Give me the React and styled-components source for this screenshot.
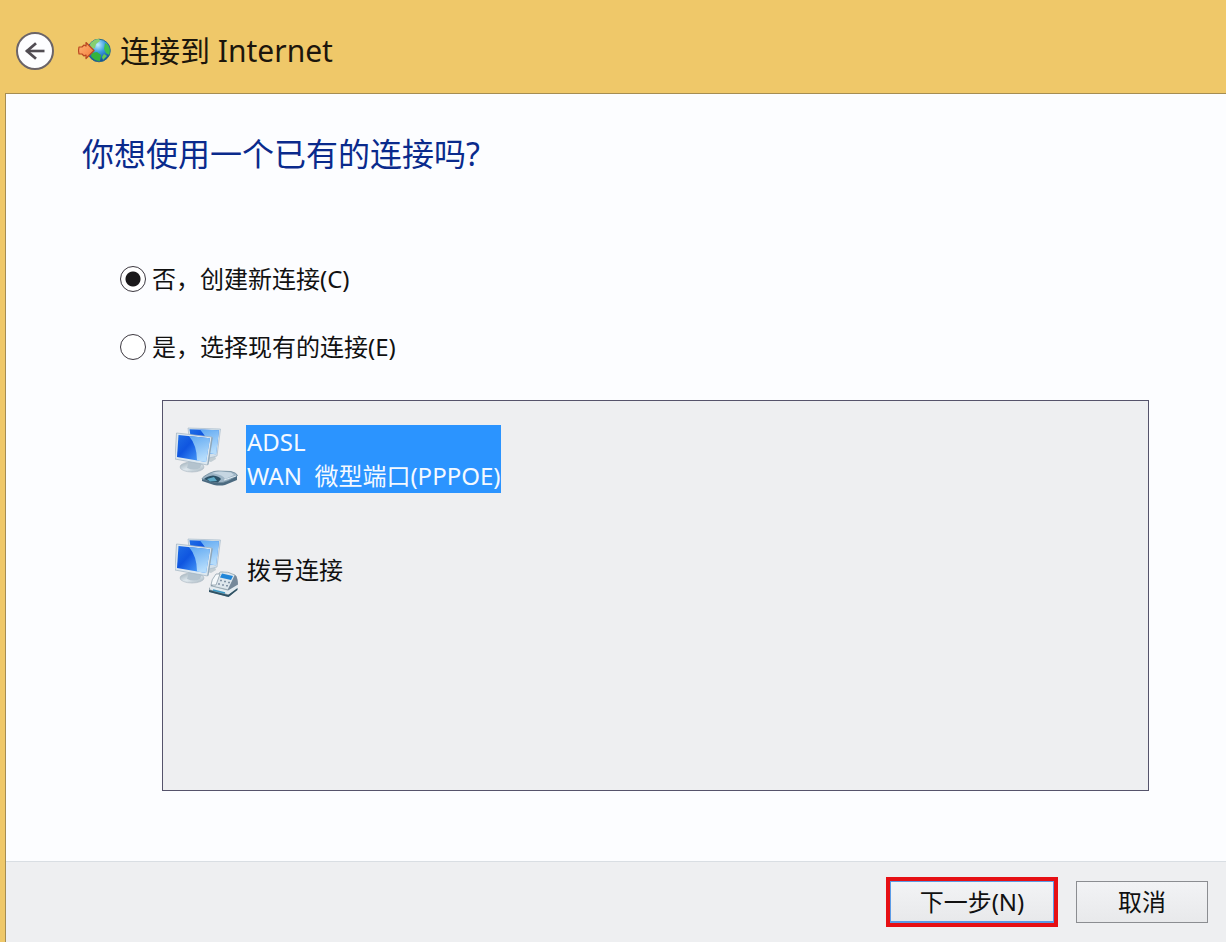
import React, { useState } from "react";
import styled, { createGlobalStyle } from "styled-components";

const GlobalStyle = createGlobalStyle`
  * {
    box-sizing: border-box;
  }
  body {
    margin: 0;
    background: #efc869;
    color: #111;
    font-family: "Noto Sans", "Noto Sans CJK SC", sans-serif;
    font-size: 24px;
  }
`;

const Window = styled.div`
  display: flex;
  flex-direction: column;
  min-height: 100vh;
  padding-left: 5px;
`;
const TitleBar = styled.header`
  display: flex;
  align-items: center;
  height: 93px;
  padding: 9px 11px 0;
`;
const BackButton = styled.button`
  display: flex;
  align-items: center;
  justify-content: center;
  width: 38px;
  height: 38px;
  margin-right: 24px;
  padding: 0;
  border: 2px solid #6b6468;
  border-radius: 50%;
  background: #fdfdff;
`;
const Title = styled.h1`
  margin: 0 0 0 8px;
  color: #1c160c;
  font-size: 30px;
  font-weight: 400;
  line-height: 40px;
`;
const Panel = styled.div`
  display: flex;
  flex: 1;
  flex-direction: column;
  border-top: 1px solid #a58d52;
  border-left: 1px solid #a58d52;
  background: #fcfdff;
`;
const Content = styled.main`
  display: flex;
  flex: 1;
  flex-direction: column;
  padding: 40px 77px 70px 76px;
`;
const Question = styled.h2`
  margin: 0 0 80px;
  color: #0a2a8c;
  font-size: 32px;
  font-weight: 400;
  line-height: 40px;
`;
const Options = styled.div`
  display: flex;
  flex-direction: column;
  align-items: flex-start;
  gap: 32px;
  margin: 7px 0 35px 38px;
`;
const Option = styled.label`
  display: flex;
  align-items: center;
  gap: 6px;
  line-height: 36px;
`;
const Radio = styled.input`
  width: 26px;
  height: 26px;
  margin: 0;
  border: 1px solid #3c3840;
  border-radius: 50%;
  background: #fff;
  appearance: none;

  &:checked {
    background: radial-gradient(circle, #1a181a 7px, #fff 8px);
  }
`;
const List = styled.div`
  display: flex;
  flex: 1;
  flex-direction: column;
  align-items: flex-start;
  gap: 43px;
  margin-left: 80px;
  padding: 24px 12px;
  border: 1px solid #55536b;
  background: #eeeff1;
`;
const Item = styled.button`
  display: flex;
  align-items: center;
  gap: 7px;
  height: 68px;
  padding: 0;
  border: 0;
  background: none;
  color: inherit;
  font: inherit;
  text-align: left;
`;
const ItemText = styled.span`
  padding: 0 1px;
  background: ${(p) => (p.$selected ? "#2b94ff" : "transparent")};
  color: ${(p) => (p.$selected ? "#f4f9ff" : "inherit")};
  line-height: 34px;
  white-space: pre-line;
`;
const Footer = styled.footer`
  display: flex;
  align-items: center;
  justify-content: flex-end;
  gap: 18px;
  height: 81px;
  padding: 0 18px;
  border-top: 1px solid #d9dee3;
  background: #eeeff1;
`;
const Highlight = styled.div`
  border: 4px solid #e60f14;
`;
const Button = styled.button`
  display: block;
  width: ${(p) => (p.$primary ? 164 : 132)}px;
  height: 42px;
  padding: 0;
  border: 1px solid ${(p) => (p.$primary ? "#5b9be6" : "#8b8d91")};
  border-bottom-width: ${(p) => (p.$primary ? 2 : 1)}px;
  background: linear-gradient(#f2f3f5, #e8e9eb);
  color: #111;
  font: inherit;
  line-height: 34px;
`;

const BackArrow = () => (
  <svg width="22" height="18" viewBox="0 0 22 18" fill="none" stroke="#514c53">
    <path d="M2.500 9H20.500" strokeWidth="2.600" />
    <path d="M12 1.200L3 9l9 7.800" strokeWidth="2.800" />
  </svg>
);

const GlobeIcon = () => (
  <svg width="34" height="26" viewBox="0 0 34 26">
    <defs>
      <radialGradient id="sea" cx="0.45" cy="0.25" r="0.8">
        <stop offset="0" stopColor="#c4efff" />
        <stop offset="0.4" stopColor="#3f9fe0" />
        <stop offset="1" stopColor="#083c91" />
      </radialGradient>
      <linearGradient id="arrow" x1="0" y1="0" x2="1" y2="1">
        <stop offset="0" stopColor="#ffb672" />
        <stop offset="1" stopColor="#f47a3c" />
      </linearGradient>
    </defs>
    <circle cx="21" cy="12.500" r="11.300" fill="url(#sea)" stroke="#2c6a86" />
    <path d="M12 6q4-5 9-5l1 2-4 3-1 4-4 1z" fill="#86cf70" />
    <path d="M27 5l3 2q3 5 1 10l-3-2-2-4z" fill="#3fc14c" />
    <path d="M14 15l5-1 4 3-1 6q-6 0-9-5z" fill="#35b43d" />
    <path d="M26 16l3 2-4 4-1-3z" fill="#64c952" />
    <path
      d="M1 9h3l2-2 2 1V4.500l8 8-8 8V17l-2 1-2-2H1l-.5-3.500z"
      fill="url(#arrow)"
      stroke="#b94721"
      strokeWidth="1.200"
      strokeLinejoin="round"
    />
  </svg>
);

const ConnectionIcon = ({ device }) => (
  <svg width="64" height="64" viewBox="0 1 64 64" aria-hidden="true">
    <defs>
      <linearGradient id={`${device}-screen`} x1="0" y1="0" x2="0.8" y2="0.6">
        <stop offset="0" stopColor="#1f6fe6" />
        <stop offset="0.5" stopColor="#0f55e0" />
        <stop offset="1" stopColor="#3f8ff4" />
      </linearGradient>
      <linearGradient id={`${device}-shine`} x1="0" y1="0" x2="0.3" y2="1">
        <stop offset="0" stopColor="#5fa8f2" />
        <stop offset="1" stopColor="#b5dcfb" />
      </linearGradient>
      <linearGradient id={`${device}-stand`} x1="0" y1="0" x2="1" y2="1">
        <stop offset="0" stopColor="#9aabb5" />
        <stop offset="0.5" stopColor="#dfe8ee" />
        <stop offset="1" stopColor="#a3b3bd" />
      </linearGradient>
    </defs>
    <path d="M34 31l6-1 1 3-5 3-4-1z" fill="#c2cdd3" />
    <path d="M13 2l32.500 1-3.500 27-8 2-18-4z" fill="#d3e0ea" stroke="#a9bccb" strokeWidth="0.700" />
    <path d="M14.500 3.200l29.500 1-3 24-23-2z" fill={`url(#${device}-screen)`} />
    <path d="M25 3.600l19 0.600-3 24-7-1q0-14-9-23.600z" fill={`url(#${device}-shine)`} />
    <ellipse cx="17" cy="41" rx="12" ry="5" fill={`url(#${device}-stand)`} stroke="#b0bcc5" strokeWidth="0.700" />
    <path d="M14 34l13 3-2 5q-6 3-13 0z" fill="#b4c3ce" />
    <path d="M1.500 7l35.500 4-4.500 28L0 33z" fill="#dde8f0" stroke="#9fb2c0" strokeWidth="0.700" />
    <path d="M3.500 9l31.500 3.300-4 23.700L2 31z" fill={`url(#${device}-screen)`} />
    <path d="M14 10.100l21 2.200-4 23.700-9-1.500q0-15-8-24.400z" fill={`url(#${device}-shine)`} />
    <path d="M36.500 11l1.300.8-4.300 26.700-1 .5z" fill="#8fa6b8" />
    {device === "modem" ? (
      <g>
        <path d="M27 53v2l12 4q6 1 11 0l12-5v-5z" fill="#4b6a80" />
        <path d="M27 53q0-2 8-6 4-2 8-2l13 .5q6 1.500 6.500 4l-9 5q-6 3-13 2z" fill="#9eb5c6" stroke="#6f8a9c" strokeWidth="0.800" />
        <path d="M37 47q4-2 9-1.500l10 1 3 2.500-9 4q-1-4-13-6z" fill="#c6d6e2" />
        <path d="M29 53q3-3 9-3.500 6 .5 8 3.500l-3 3.500-7-.5z" fill="#2b5167" />
        <path d="M32 53l7-2 3 4-7 .5z" fill="#5fa9c6" />
        <path d="M49 54l12-4" stroke="#dce8f0" />
      </g>
    ) : (
      <g>
        <path d="M34 52l2-4 9-12q1-2 4-1l11 3q2 1 2 4l1 9-8 8q-2 1-5 0l-15-4z" fill="#8798a4" />
        <path d="M45 35q8-1 15 3l-6 15-17-4z" fill="#dde6ec" stroke="#98aab3" strokeWidth="0.800" />
        <path d="M60 38q3 2 3 11l-9 7-1-4z" fill="#76899a" />
        <path d="M47 36.500l11 2.500-2 4-11-2.500z" fill="#2186d8" />
        <path d="M41 37l4 0-4 11-5 0q0-5 5-11z" fill="#f5f9fb" stroke="#8193a0" strokeWidth="0.700" />
        <path d="M45 43.500h2m2 1h2m2 1h2m-12 1.500h2m2 1h2m2 .8h2" stroke="#8193a5" strokeWidth="1.400" />
        <path d="M35 49l18 4.500 10-6v4l-9 6-19-5z" fill="#e3ebf0" />
        <path d="M34 53l19 5 9.500-7v2l-9 7-19.500-5z" fill="#2f5264" />
        <path d="M38 53l12 3" stroke="#3897c4" strokeWidth="1.500" />
      </g>
    )}
  </svg>
);

const options = [
  { value: "new", label: "否，创建新连接(C)" },
  { value: "existing", label: "是，选择现有的连接(E)" },
];

const connections = [
  { device: "modem", label: "ADSL\nWAN \u00a0微型端口(PPPOE)" },
  { device: "phone", label: "拨号连接" },
];

const App = () => {
  const [choice, setChoice] = useState("new");
  const [selected, setSelected] = useState("modem");

  return (
    <Window lang="zh-CN">
      <GlobalStyle />
      <TitleBar>
        <BackButton aria-label="返回">
          <BackArrow />
        </BackButton>
        <GlobeIcon />
        <Title>连接到 Internet</Title>
      </TitleBar>
      <Panel>
        <Content>
          <Question>你想使用一个已有的连接吗?</Question>
          <Options>
            {options.map(({ value, label }) => (
              <Option key={value}>
                <Radio
                  type="radio"
                  name="connection"
                  checked={choice === value}
                  onChange={() => setChoice(value)}
                />
                {label}
              </Option>
            ))}
          </Options>
          <List>
            {connections.map(({ device, label }) => (
              <Item
                key={device}
                type="button"
                aria-pressed={selected === device}
                onClick={() => setSelected(device)}
              >
                <ConnectionIcon device={device} />
                <ItemText $selected={selected === device}>{label}</ItemText>
              </Item>
            ))}
          </List>
        </Content>
        <Footer>
          <Highlight>
            <Button $primary>下一步(N)</Button>
          </Highlight>
          <Button>取消</Button>
        </Footer>
      </Panel>
    </Window>
  );
};

export default App;
